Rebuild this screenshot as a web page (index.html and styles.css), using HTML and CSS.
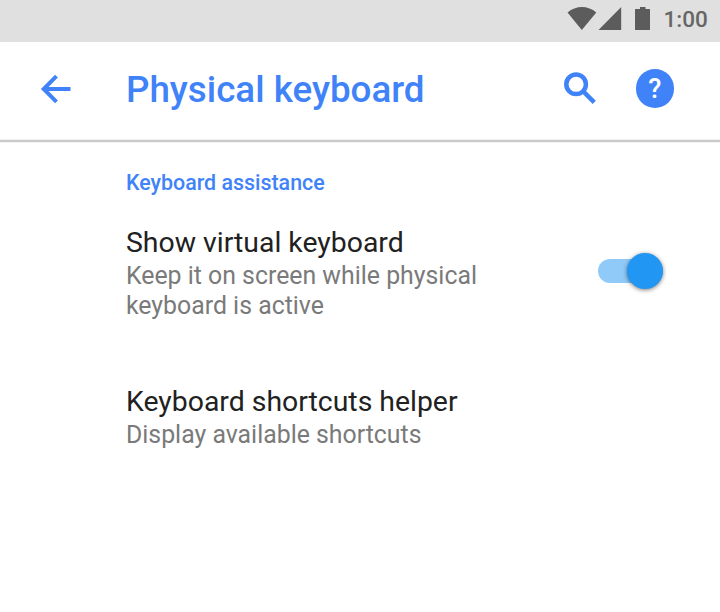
FILE: index.html
```html
<!DOCTYPE html>
<html lang="en">
<head>
<meta charset="utf-8">
<title>Physical keyboard</title>
<link rel="stylesheet" href="styles.css">
</head>
<body>
<div class="status">
  <svg class="status-icons" width="84" height="24" viewBox="0 0 84 24">
    <path d="M-.5 5.500C8-1.900 20-1.900 28.300 5.500L13.800 23Z"/>
    <path d="M53.200 0V23H30.500Z"/>
    <path d="M72 0h5.500v2h4q.5 0 .5.500V22.500q0 .5-.5.500H67.500q-.5 0-.5-.5V2.500q0-.5.5-.5h4.500Z"/>
  </svg>
  <span class="clock">1:00</span>
</div>
<header class="bar">
  <svg class="back" width="30" height="30" viewBox="0 0 30 30"><path d="M29.500 15H3.500M15.500 2.200L2.700 15L15.500 27.800"/></svg>
  <h1 class="title">Physical keyboard</h1>
  <svg class="search" width="33" height="33" viewBox="3 3 18 18"><circle cx="9.600" cy="9.700" r="5.350"/><path d="M13.500 13.600L19.500 19.600"/></svg>
  <div class="help">?</div>
</header>
<main class="content">
  <h2 class="section">Keyboard assistance</h2>
  <div class="row">
    <div class="copy">
      <div class="name">Show virtual keyboard</div>
      <div class="desc">Keep it on screen while physical<br>keyboard is active</div>
    </div>
    <div class="switch"><div class="thumb"></div></div>
  </div>
  <div class="row second">
    <div class="copy">
      <div class="name">Keyboard shortcuts helper</div>
      <div class="desc">Display available shortcuts</div>
    </div>
  </div>
</main>
</body>
</html>
```
FILE: styles.css
```css
* { box-sizing: border-box; }
body { margin: 0; background: #fff; font-family: Roboto, "Liberation Sans", sans-serif; }
h1, h2 { margin: 0; font-weight: 500; }
svg { display: block; flex: none; overflow: visible; }
.status { height: 42px; background: #e0e0e0; display: flex; align-items: flex-start; padding: 7px 0 0 568px; }
.status-icons { fill: #5c5c5c; }
.clock { margin: -1px 0 0 11.500px; font-size: 22.500px; font-weight: 500; line-height: 26px; color: #666; white-space: nowrap; }
.bar { height: 100px; display: flex; align-items: center; padding: 0 46px 4px 41px; border-bottom: 2px solid #cacaca; box-shadow: 0 1px 0 #f3f3f3, inset 0 -1px 0 #f0f0f0; }
.back { margin-top: -1px; fill: none; stroke: #4083f8; stroke-width: 4; }
.search { margin-left: auto; margin-top: -1px; fill: none; stroke: #4083f8; stroke-width: 2.450; }
.title { margin-left: 55px; padding-top: 1px; color: #4083f8; font-size: 36.750px; line-height: 42px; white-space: nowrap; }
.help { width: 38.500px; height: 38.500px; margin-left: 39px; margin-top: -1px; border-radius: 50%; background: #4083f8; color: #fff; font-size: 27px; font-weight: 500; line-height: 40px; text-align: center; }
.content { padding: 29px 57px 0 126px; }
.section { color: #4083f8; font-size: 21.400px; line-height: 24px; }
.row { display: flex; justify-content: space-between; margin-top: 31px; }
.second { margin-top: 64px; }
.name { font-size: 28.400px; line-height: 34px; color: #212121; white-space: nowrap; }
.desc { padding-top: 1px; font-size: 24.850px; line-height: 30px; color: #7a7a7a; white-space: nowrap; }
.switch { width: 65px; height: 24px; margin-top: 33px; border-radius: 12px; background: #90caf9; }
.thumb { width: 36px; height: 36px; margin: -6px 0 0 29px; border-radius: 50%; background: #2196f3; box-shadow: 0 1px 4px rgba(0,0,0,.5); }
```
